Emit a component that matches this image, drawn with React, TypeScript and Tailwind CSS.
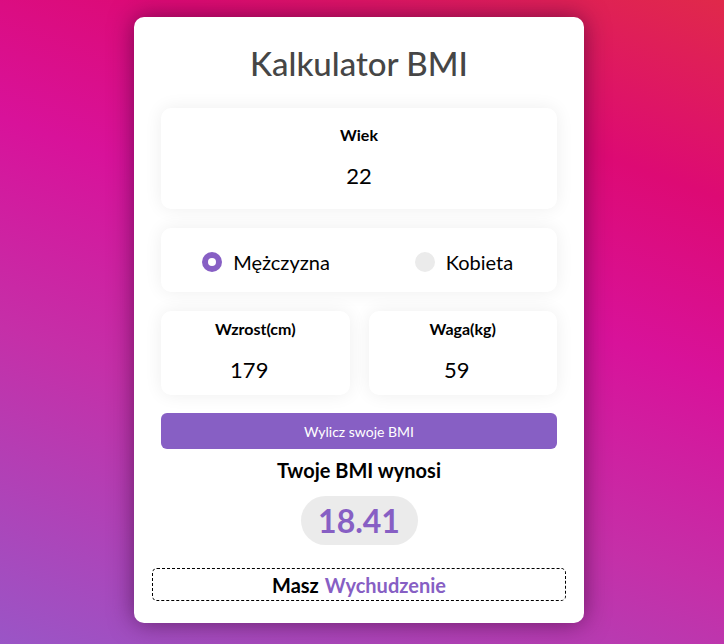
import { useState } from 'react';

const PURPLE = 'text-[#875fc4]';

export default function App() {
  const [gender, setGender] = useState<'m' | 'k'>('m');

  return (
    <div className="min-h-screen w-full bg-[linear-gradient(20deg,#9a55c6_0%,#c52fa8_35%,#d8129a_58%,#dd0a74_78%,#e0294a_100%)] pt-[17px] pr-[6px] font-['Lato','Noto_Sans',sans-serif]">
      {/* Card */}
      <div className="mx-auto w-[450px] rounded-[10px] bg-white px-[18px] pt-[26px] pb-[22px] shadow-[0_0_24px_rgba(40,0,40,0.55)]">
        <h1 className="text-center text-[33px] leading-[40px] font-medium text-[#464646]">Kalkulator BMI</h1>

        <div className="mx-[9px] mt-[25px] flex flex-col gap-[19px]">
          {/* Wiek */}
          <div className="flex h-[101px] flex-col items-center rounded-[10px] bg-white pt-[17px] shadow-[0_0_18px_rgba(0,0,0,0.07)]">
            <label className="text-[16px] leading-[20px] font-bold text-black">Wiek</label>
            <div className="mt-[17px] text-[22px] leading-[28px] text-black">22</div>
          </div>

          {/* Plec */}
          <div className="grid h-[64px] grid-cols-2 items-center rounded-[10px] bg-white pt-[3px] shadow-[0_0_18px_rgba(0,0,0,0.07)]">
            {[
              { id: 'm' as const, label: 'Mężczyzna' },
              { id: 'k' as const, label: 'Kobieta' },
            ].map((g) => (
              <button
                key={g.id}
                onClick={() => setGender(g.id)}
                className="flex items-center justify-center gap-[11px] pl-[12px]"
              >
                {gender === g.id ? (
                  <span className="flex h-[20px] w-[20px] items-center justify-center rounded-full bg-[#875fc4]">
                    <span className="h-[8px] w-[8px] rounded-full bg-white" />
                  </span>
                ) : (
                  <span className="h-[20px] w-[20px] rounded-full bg-[#ebebeb]" />
                )}
                <span className="text-[20px] leading-[28px] text-black">{g.label}</span>
              </button>
            ))}
          </div>

          {/* Wzrost / Waga */}
          <div className="grid grid-cols-2 gap-[19px]">
            {[
              { label: 'Wzrost(cm)', value: '179' },
              { label: 'Waga(kg)', value: '59' },
            ].map((f) => (
              <div
                key={f.label}
                className="flex h-[84px] flex-col items-center rounded-[10px] bg-white pt-[8px] shadow-[0_0_18px_rgba(0,0,0,0.07)]"
              >
                <label className="text-[16px] leading-[20px] font-bold text-black">{f.label}</label>
                <div className="mt-[17px] pr-[12px] text-[22px] leading-[28px] text-black">{f.value}</div>
              </div>
            ))}
          </div>
        </div>

        <button className="mx-[9px] mt-[18px] block h-[36px] w-[396px] rounded-[6px] bg-[#875fc4] text-[14px] text-white">
          Wylicz swoje BMI
        </button>

        <div className="mt-[7px] text-center text-[20px] leading-[28px] font-bold text-black">Twoje BMI wynosi</div>

        <div className="mt-[12px] flex justify-center">
          <div className={`flex h-[49px] w-[117px] items-center justify-center rounded-full bg-[#ebebeb] text-[32px] font-bold ${PURPLE}`}>
            18.41
          </div>
        </div>

        <div className="mt-[23px] flex h-[33px] items-center justify-center rounded-[5px] border border-dashed border-black text-[20px] font-bold">
          <span className="text-black">Masz</span>
          <span className={`ml-[6px] ${PURPLE}`}>Wychudzenie</span>
        </div>
      </div>
    </div>
  );
}
